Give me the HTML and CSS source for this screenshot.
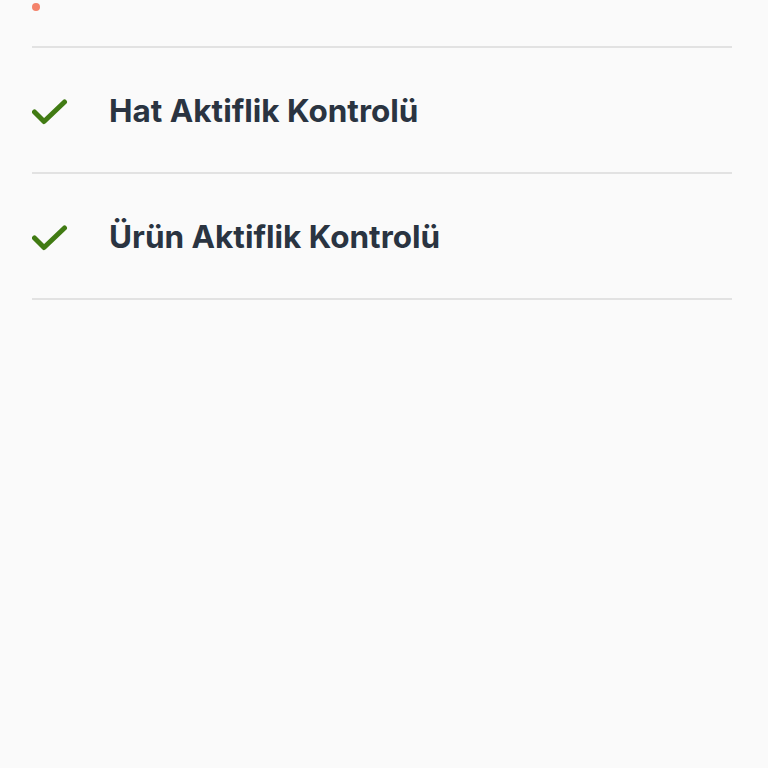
FILE: index.html
```html
<!DOCTYPE html>
<html lang="tr">
<head>
<meta charset="utf-8">
<link rel="stylesheet" href="styles.css">
</head>
<body>
<div class="page">
  <div class="top">
    <span class="dot"></span>
  </div>
  <ul class="list">
    <li class="row">
      <svg class="check" viewBox="0 0 36 26" width="36" height="26"><path d="M2.5 13 L12 22.5 L32.5 3" fill="none" stroke="#417b13" stroke-width="5" stroke-linecap="round" stroke-linejoin="round"/></svg>
      <span class="label">Hat Aktiflik Kontrolü</span>
    </li>
    <li class="row">
      <svg class="check" viewBox="0 0 36 26" width="36" height="26"><path d="M2.5 13 L12 22.5 L32.5 3" fill="none" stroke="#417b13" stroke-width="5" stroke-linecap="round" stroke-linejoin="round"/></svg>
      <span class="label">Ürün Aktiflik Kontrolü</span>
    </li>
  </ul>
</div>
</body>
</html>
```
FILE: styles.css
```css
html, body {
  margin: 0;
  padding: 0;
  background: #fafafa;
  height: 100%;
}
.page {
  padding: 0 36px 0 32px;
  font-family: "Inter", "Noto Sans", sans-serif;
}
.top {
  height: 46px;
  border-bottom: 2px solid #e2e2e2;
  position: relative;
}
.dot {
  position: absolute;
  left: 0;
  top: 3px;
  width: 8px;
  height: 8px;
  border-radius: 50%;
  background: #f4836b;
}
.list {
  list-style: none;
  margin: 0;
  padding: 0;
}
.row {
  display: flex;
  align-items: center;
  height: 124px;
  border-bottom: 2px solid #e2e2e2;
}
.check {
  flex: none;
  width: 36px;
  height: 26px;
  margin-top: 4px;
}
.label {
  margin-left: 41px;
  font-size: 31.5px;
  font-weight: 700;
  color: #2a3441;
}
```
